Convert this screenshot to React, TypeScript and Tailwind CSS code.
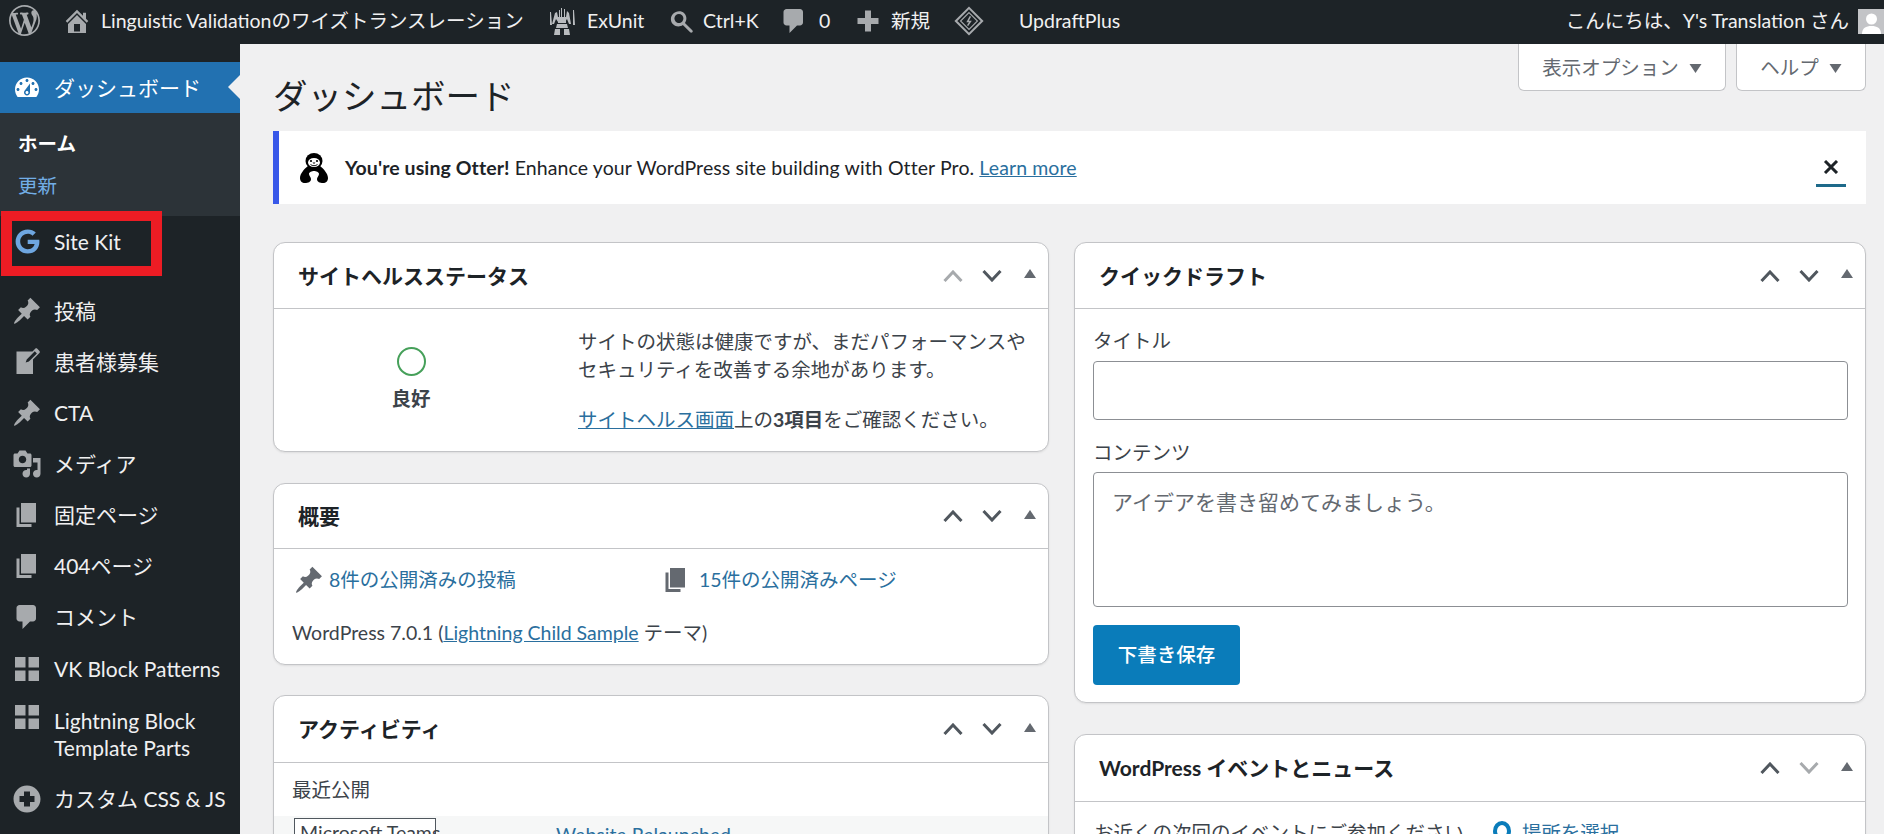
import React from 'react';
import { FaGoogle } from 'react-icons/fa';

const paths = {
  wp: 'M20 10c0-5.51-4.49-10-10-10C4.48 0 0 4.49 0 10c0 5.52 4.48 10 10 10 5.51 0 10-4.48 10-10zM7.78 15.37L4.37 6.22c.55-.02 1.17-.08 1.17-.08.5-.06.44-1.13-.06-1.11 0 0-1.45.11-2.37.11-.18 0-.37 0-.58-.01C4.12 2.69 6.87 1.11 10 1.11c2.33 0 4.45.87 6.05 2.34-.68-.11-1.65.39-1.65 1.58 0 .74.45 1.36.9 2.1.35.61.55 1.36.55 2.46 0 1.49-1.4 5-1.4 5l-3.03-8.37c.54-.02.82-.17.82-.17.5-.05.44-1.25-.06-1.22 0 0-1.44.12-2.38.12-.87 0-2.33-.12-2.33-.12-.5-.03-.56 1.2-.06 1.22l.92.08 1.26 3.41zM17.41 10c.24-.64.74-1.87.43-4.25.7 1.29 1.05 2.71 1.05 4.25 0 3.29-1.73 6.24-4.4 7.78.97-2.59 1.94-5.2 2.92-7.78zM6.1 18.09C3.12 16.65 1.11 13.53 1.11 10c0-1.3.23-2.48.72-3.59C3.25 10.3 4.67 14.2 6.1 18.09zm4.03-6.63l2.58 6.98c-.86.29-1.76.45-2.71.45-.79 0-1.57-.11-2.29-.33.81-2.38 1.62-4.74 2.42-7.1z',
  home: 'M16 8.5l1.53 1.53-1.06 1.06L10 4.62l-6.47 6.47-1.06-1.06L10 2.5l4 4v-2h2v4zm-6-2.46l6 5.99V18H4v-5.97zM12 17v-5H8v5h4z',
  search: 'M12.14 4.78c1.77 1.77 1.93 4.52.49 6.48l4.9 4.9c.4.4.4 1.03 0 1.42-.39.39-1.03.39-1.42 0l-4.9-4.9c-1.96 1.43-4.71 1.27-6.48-.5-1.95-1.95-1.95-5.12 0-7.07s5.46-2.28 7.41-.33zm-1.41 1.41c-1.17-1.17-3.07-1.17-4.24 0-1.17 1.17-1.17 3.07 0 4.24 1.17 1.17 3.07 1.17 4.24 0 1.17-1.17 1.17-3.07 0-4.24z',
  comment: 'M5 2h9c1.1 0 2 .9 2 2v7c0 1.1-.9 2-2 2h-2l-5 5v-5H5c-1.1 0-2-.9-2-2V4c0-1.1.9-2 2-2z',
  plus: 'M17 8v4h-5v5H8v-5H3V8h5V3h4v5h5z',
  dashboard: 'M3.76 16h12.48c1.1-1.37 1.76-3.11 1.76-5 0-4.42-3.58-8-8-8s-8 3.58-8 8c0 1.89.66 3.63 1.76 5zM10 4c.55 0 1 .45 1 1s-.45 1-1 1-1-.45-1-1 .45-1 1-1zM6 6c.55 0 1 .45 1 1s-.45 1-1 1-1-.45-1-1 .45-1 1-1zm8 0c.55 0 1 .45 1 1s-.45 1-1 1-1-.45-1-1 .45-1 1-1zm-5.37 5.55L12 7v6c0 1.1-.9 2-2 2s-2-.9-2-2c0-.57.24-1.08.63-1.45zM4 10c.55 0 1 .45 1 1s-.45 1-1 1-1-.45-1-1 .45-1 1-1zm12 0c.55 0 1 .45 1 1s-.45 1-1 1-1-.45-1-1 .45-1 1-1zm-5 3c0-.55-.45-1-1-1s-1 .45-1 1 .45 1 1 1 1-.45 1-1z',
  pin: 'M10.44 3.02l1.82-1.82 6.36 6.35-1.83 1.82c-1.05-.68-2.48-.57-3.41.36l-.75.75c-.92.93-1.04 2.35-.35 3.41l-1.83 1.82-2.41-2.41-2.8 2.79c-.42.42-3.38 2.71-3.8 2.29s1.86-3.39 2.28-3.81l2.79-2.79L4.1 9.36l1.83-1.82c1.05.69 2.48.57 3.4-.36l.75-.75c.93-.92 1.05-2.35.36-3.41z',
  write: 'M16.89 1.2l1.41 1.41c.39.39.39 1.02 0 1.41L14 8.33V18H3V3h10.67l1.8-1.8c.4-.39 1.03-.4 1.42 0zm-5.66 8.48l5.37-5.36-1.42-1.42-5.36 5.37-.71 2.12z',
  media: 'M13 11V4c0-.55-.45-1-1-1h-1.67L9 1H5L3.67 3H2c-.55 0-1 .45-1 1v7c0 .55.45 1 1 1h10c.55 0 1-.45 1-1zM7 4.5c1.38 0 2.5 1.12 2.5 2.5S8.38 9.5 7 9.5 4.5 8.38 4.5 7 5.62 4.5 7 4.5zM14 6h5v10.5c0 1.38-1.12 2.5-2.5 2.5S14 17.88 14 16.5s1.12-2.5 2.5-2.5c.17 0 .34.02.5.05V9h-3V6zm-4 8.05V13h2v3.5c0 1.38-1.12 2.5-2.5 2.5S7 17.88 7 16.5 8.12 14 9.5 14c.17 0 .34.02.5.05z',
  page: 'M6 15V2h10v13H6zm-1 1h8v2H3V5h2v11z',
  grid: 'M2 2h7v7H2zM11 2h7v7h-7zM2 11h7v7H2zM11 11h7v7h-7z',
  plusAlt: 'M10 1c-5 0-9 4-9 9s4 9 9 9 9-4 9-9-4-9-9-9zm5 11h-3v3H8v-3H5V8h3V5h4v3h3v4z',
};

type IconName = keyof typeof paths;

const Icon = ({ name, className }: { name: IconName; className: string }) => (
  <svg viewBox="0 0 20 20" className={className} fill="currentColor" fillRule="evenodd">
    <path d={paths[name]} />
  </svg>
);

const menu: { icon: IconName; label: React.ReactNode; cls: string }[] = [
  { icon: 'pin', label: '投稿', cls: 'h-[51px]' },
  { icon: 'write', label: '患者様募集', cls: 'h-[51px]' },
  { icon: 'pin', label: 'CTA', cls: 'h-[51px]' },
  { icon: 'media', label: 'メディア', cls: 'h-[51px]' },
  { icon: 'page', label: '固定ページ', cls: 'h-[51px]' },
  { icon: 'page', label: '404ページ', cls: 'h-[51px]' },
  { icon: 'comment', label: 'コメント', cls: 'h-[52px]' },
  { icon: 'grid', label: 'VK Block Patterns', cls: 'h-[51px]' },
];

const ExUnitLogo = () => (
  <svg viewBox="0 0 26 30" className="w-[26px] h-[30px] text-[#b9bcbf]" fill="currentColor">
    <path d="M1 6h1l1 13H1zM24 4h1l1 15h-2zM6 7l2-1 1 5h8l1-6 2 2 2 11h-2l-2-5-2 3H9l-2-3-2 5H3z" />
    <path d="M9 13h8v4H9zM8 18h10l1 4H7zM6 23h5v6H5zM15 23h5l1 6h-6z" />
    <path d="M12 2h1v9h-1zM15 3h1v8h-1zM10 4h1v7h-1z" />
  </svg>
);

const UpdraftLogo = () => (
  <svg viewBox="0 0 32 32" className="w-[30px] h-[30px] text-[#a7aaad]" fill="none" stroke="currentColor">
    <path d="M16 2l14 14-14 14L2 16z" strokeWidth="2.2" />
    <path d="M16 7l9 9-9 9-9-9z" strokeWidth="1.2" />
    <path d="M17.5 11l-3 5.5h3l-3 4.5" strokeWidth="1.6" />
  </svg>
);

const OtterLogo = () => (
  <svg viewBox="0 0 28 30" className="w-[28px] h-[30px]">
    {/* head */}
    <ellipse cx="14" cy="8" rx="8.5" ry="8" fill="#000" />
    {/* arms */}
    <path d="M8 13C4 16 0 21 0 25c0 3 2 5 5 5 3 0 6-1 6-4 0-2-2-3-2-5 0-2 3-3 5-3s5 1 5 3c0 2-2 3-2 5 0 3 3 4 6 4 3 0 5-2 5-5 0-4-4-9-8-12z" fill="#000" />
    {/* face */}
    <ellipse cx="14" cy="9.5" rx="6" ry="4.5" fill="#fff" />
    <circle cx="11" cy="8" r="1.1" fill="#000" />
    <circle cx="17" cy="8" r="1.1" fill="#000" />
    <path d="M12.5 9.5h3L14 11z" fill="#000" />
    <path d="M10.5 11.5c2 1.6 5 1.6 7 0" stroke="#000" strokeWidth="0.9" fill="none" />
  </svg>
);

const Arrows = ({ upOff, downOff }: { upOff?: boolean; downOff?: boolean }) => (
  <div className="flex items-center">
    <button className="w-[39px] flex justify-center">
      <svg viewBox="0 0 20 12" className={upOff ? 'w-[20px] h-[12px] text-[#a7aaad]' : 'w-[20px] h-[12px] text-[#50575e]'} fill="none" stroke="currentColor" strokeWidth="3">
        <path d="M1.5 11L10 2l8.5 9" />
      </svg>
    </button>
    <button className="w-[39px] flex justify-center">
      <svg viewBox="0 0 20 12" className={downOff ? 'w-[20px] h-[12px] text-[#a7aaad]' : 'w-[20px] h-[12px] text-[#50575e]'} fill="none" stroke="currentColor" strokeWidth="3">
        <path d="M1.5 1L10 10l8.5-9" />
      </svg>
    </button>
    <button className="w-[37px] flex justify-center pb-[4px]">
      <svg viewBox="0 0 12 9" className="w-[12px] h-[9px] text-[#646970]" fill="currentColor">
        <path d="M6 0l6 9H0z" />
      </svg>
    </button>
  </div>
);

const Card = ({
  title,
  headCls,
  className,
  upOff,
  downOff,
  children,
}: {
  title: string;
  headCls: string;
  className: string;
  upOff?: boolean;
  downOff?: boolean;
  children: React.ReactNode;
}) => (
  <section className={`bg-white border border-[#c3c4c7] rounded-[12px] shadow-[0_1px_2px_rgba(0,0,0,0.08)] ${className}`}>
    <div className={`flex items-center justify-between border-b border-[#c3c4c7] pl-[24px] ${headCls}`}>
      <h2 className="text-[21px] font-bold text-[#1d2327] leading-[30px]">{title}</h2>
      <Arrows upOff={upOff} downOff={downOff} />
    </div>
    {children}
  </section>
);

const TopBar = () => (
  <header className="h-[44px] shrink-0 bg-[#1d2327] text-[#f0f0f1] flex items-center pb-[3px] text-[19.5px] whitespace-nowrap">
    <Icon name="wp" className="w-[31px] h-[31px] ml-[9px] text-[#a7aaad]" />
    <Icon name="home" className="w-[30px] h-[30px] ml-[22px] text-[#a7aaad]" />
    <span className="ml-[9px] w-[448px]">Linguistic Validationのワイズトランスレーション</span>
    <ExUnitLogo />
    <span className="ml-[12px] w-[54px]">ExUnit</span>
    <Icon name="search" className="w-[30px] h-[30px] ml-[25px] text-[#a7aaad]" />
    <span className="ml-[7px] w-[55px]">Ctrl+K</span>
    <Icon name="comment" className="w-[30px] h-[30px] ml-[21px] text-[#a7aaad]" />
    <span className="ml-[10px] w-[12px]">0</span>
    <Icon name="plus" className="w-[30px] h-[30px] ml-[22px] text-[#a7aaad]" />
    <span className="ml-[8px] w-[39px]">新規</span>
    <div className="ml-[24px]">
      <UpdraftLogo />
    </div>
    <span className="ml-[35px]">UpdraftPlus</span>
    <span className="ml-auto">こんにちは、Y's Translation さん</span>
    <div className="ml-[9px] w-[26px] h-[25px] bg-[#c3c4c7] overflow-hidden flex justify-center mt-[2px]">
      <svg viewBox="0 0 25 25" className="w-[25px] h-[25px]" fill="#fff">
        <circle cx="12.5" cy="10" r="5.5" />
        <path d="M3 25c0-6 4-8 9.5-8s9.5 2 9.5 8z" />
      </svg>
    </div>
  </header>
);

const Sidebar = () => (
  <aside className="relative w-[240px] shrink-0 bg-[#1d2327] text-[#f0f0f1] text-[21px] pt-[18px]">
    <div className="relative h-[51px] bg-[#2271b1] text-white flex items-center">
      <Icon name="dashboard" className="w-[30px] h-[30px] ml-[12px] mr-[12px]" />
      <span>ダッシュボード</span>
      <span className="absolute right-0 top-[13px] w-0 h-0 border-y-[12px] border-y-transparent border-r-[12px] border-r-[#f0f0f1]" />
    </div>
    <div className="h-[103px] bg-[#2c3338] pt-[17px] pl-[18px] text-[19.5px]">
      <div className="h-[28px] leading-[28px] font-bold text-white">ホーム</div>
      <div className="h-[28px] leading-[28px] mt-[14px] text-[#72aee6]">更新</div>
    </div>
    <div className="h-[51px] flex items-center mb-[18px]">
      <FaGoogle className="w-[25px] h-[25px] ml-[15px] mr-[14px] text-[#6ea6e0]" />
      <span>Site Kit</span>
    </div>
    {menu.map((m, i) => (
      <div key={i} className={`flex items-center ${m.cls}`}>
        <Icon name={m.icon} className="w-[30px] h-[30px] ml-[12px] mr-[12px] text-[#a7aaad]" />
        <span>{m.label}</span>
      </div>
    ))}
    <div className="h-[79px] flex items-start pt-[8px]">
      <Icon name="grid" className="w-[30px] h-[30px] ml-[12px] mr-[12px] text-[#a7aaad] shrink-0" />
      <span className="leading-[27px] pt-[5px]">
        Lightning Block
        <br />
        Template Parts
      </span>
    </div>
    <div className="h-[51px] flex items-center">
      <Icon name="plusAlt" className="w-[30px] h-[30px] ml-[12px] mr-[12px] text-[#a7aaad]" />
      <span>カスタム CSS &amp; JS</span>
    </div>
    {/* annotation box drawn over the menu */}
    <div className="absolute left-[1px] top-[167px] w-[161px] h-[65px] border-[10px] border-x-[11px] border-[#ed1c24]" />
  </aside>
);

const Content = () => (
  <main className="flex-1 min-w-0 bg-[#f0f0f1] pl-[33px] pr-[18px] text-[19.5px] leading-[28px] text-[#3c434a]">
    <div className="h-[87px] flex items-start justify-between">
      <h1 className="mt-[27px] text-[34.5px] leading-[50px] font-normal text-[#1d2327]">ダッシュボード</h1>
      <div className="flex gap-[10px]">
        <button className="w-[208px] h-[47px] pt-[2px] bg-white border border-t-0 border-[#c3c4c7] rounded-b-[6px] text-[#646970] flex items-center justify-center gap-[10px]">
          表示オプション
          <svg viewBox="0 0 12 9" className="w-[13px] h-[9px]" fill="currentColor"><path d="M0 0h12L6 9z" /></svg>
        </button>
        <button className="w-[130px] h-[47px] pt-[2px] bg-white border border-t-0 border-[#c3c4c7] rounded-b-[6px] text-[#646970] flex items-center justify-center gap-[10px]">
          ヘルプ
          <svg viewBox="0 0 12 9" className="w-[13px] h-[9px]" fill="currentColor"><path d="M0 0h12L6 9z" /></svg>
        </button>
      </div>
    </div>

    <div className="h-[73px] bg-white border-l-[6px] border-[#3858e9] flex items-center mb-[38px] pl-[21px] pr-[20px]">
      <OtterLogo />
      <p className="ml-[17px] pt-[1px] text-[#1d2327] tracking-[0.1px]">
        <b>You're using Otter!</b> Enhance your WordPress site building with Otter Pro.{' '}
        <a className="text-[#2a6f9e] underline">Learn more</a>
      </p>
      <button className="ml-auto self-start mt-[29px] w-[30px] h-[27px] flex justify-center border-b-[3px] border-[#1e6a8a]">
        <svg viewBox="0 0 16 14" className="w-[16px] h-[14px]" fill="none" stroke="#1d2327" strokeWidth="3">
          <path d="M2 1l12 12M14 1L2 13" />
        </svg>
      </button>
    </div>

    <div className="flex gap-[25px] items-start">
      {/* left column */}
      <div className="w-[776px] shrink-0">
        <Card title="サイトヘルスステータス" headCls="h-[66px]" className="h-[210px] mb-[31px]" upOff>
          <div className="flex">
            <div className="w-[274px] flex flex-col items-center pt-[38px]">
              <div className="w-[29px] h-[29px] rounded-full border-2 border-[#46a05a]" />
              <div className="mt-[9px] font-bold">良好</div>
            </div>
            <div className="ml-[30px] pt-[19px]">
              <p>
                サイトの状態は健康ですが、まだパフォーマンスや
                <br />
                セキュリティを改善する余地があります。
              </p>
              <p className="mt-[22px]">
                <a className="text-[#2a6f9e] underline">サイトヘルス画面</a>上の<b>3項目</b>をご確認ください。
              </p>
            </div>
          </div>
        </Card>

        <Card title="概要" headCls="h-[65px]" className="h-[182px] mb-[30px]">
          <div className="pt-[16px] pl-[20px]">
            <div className="flex">
              <div className="w-[372px] flex items-center">
                <Icon name="pin" className="w-[30px] h-[30px] text-[#646970] shrink-0" />
                <a className="ml-[5px] text-[#2a6f9e]">8件の公開済みの投稿</a>
              </div>
              <div className="flex items-center">
                <Icon name="page" className="w-[30px] h-[30px] text-[#646970] -ml-[5px] shrink-0" />
                <a className="ml-[8px] text-[#2a6f9e]">15件の公開済みページ</a>
              </div>
            </div>
            <p className="mt-[24px] -ml-[2px]">
              WordPress 7.0.1 (<a className="text-[#2a6f9e] underline">Lightning Child Sample</a> テーマ)
            </p>
          </div>
        </Card>

        <Card title="アクティビティ" headCls="h-[67px]" className="h-[200px]">
          <div className="pt-[13px]">
            <p className="pl-[18px]">最近公開</p>
            <div className="mt-[12px] h-[60px] bg-[#f6f7f7] flex pl-[20px]">
              <div className="mt-[2px] h-[40px] w-[142px] border border-[#50575e] bg-white pl-[5px] leading-[28px] whitespace-nowrap">
                Microsoft Teams
              </div>
              <a className="ml-[120px] mt-[4px] leading-[30px] text-[#2a6f9e]">Website Relaunched</a>
            </div>
          </div>
        </Card>
      </div>

      {/* right column */}
      <div className="flex-1 min-w-0">
        <Card title="クイックドラフト" headCls="h-[66px]" className="mb-[31px]">
          <div className="pt-[18px] pl-[18px] pr-[17px] pb-[17px]">
            <label className="block">タイトル</label>
            <input className="block w-full h-[59px] mt-[6px] bg-white border border-[#8c8f94] rounded-[4px]" />
            <label className="block mt-[19px]">コンテンツ</label>
            <textarea
              className="block w-full h-[135px] mt-[5px] px-[18px] py-[14px] text-[21px] leading-[30px] bg-white border border-[#8c8f94] rounded-[4px] resize-none placeholder:text-[#646970] placeholder:opacity-100"
              placeholder="アイデアを書き留めてみましょう。"
            />
            <button className="block w-[147px] h-[60px] mt-[18px] bg-[#0a7cba] text-white rounded-[4px] font-medium">下書き保存</button>
          </div>
        </Card>

        <Card title="WordPress イベントとニュース" headCls="h-[67px]" className="h-[200px]" downOff>
          <div className="pt-[17px] pl-[19px] flex items-center text-[#3c434a]">
            <span>お近くの次回のイベントにご参加ください。</span>
            <svg viewBox="0 0 20 24" className="w-[20px] h-[24px] ml-[8px] text-[#0a7cba]" fill="none" stroke="currentColor" strokeWidth="4">
              <ellipse cx="10" cy="10" rx="7" ry="8" />
            </svg>
            <a className="ml-[10px] text-[#2a6f9e] underline">場所を選択</a>
          </div>
        </Card>
      </div>
    </div>
  </main>
);

const App = () => (
  <div className="h-[834px] overflow-hidden flex flex-col bg-[#f0f0f1] font-['Lato','Noto_Sans_CJK_JP',sans-serif]">
    <TopBar />
    <div className="flex flex-1 min-h-0">
      <Sidebar />
      <Content />
    </div>
  </div>
);

export default App;
